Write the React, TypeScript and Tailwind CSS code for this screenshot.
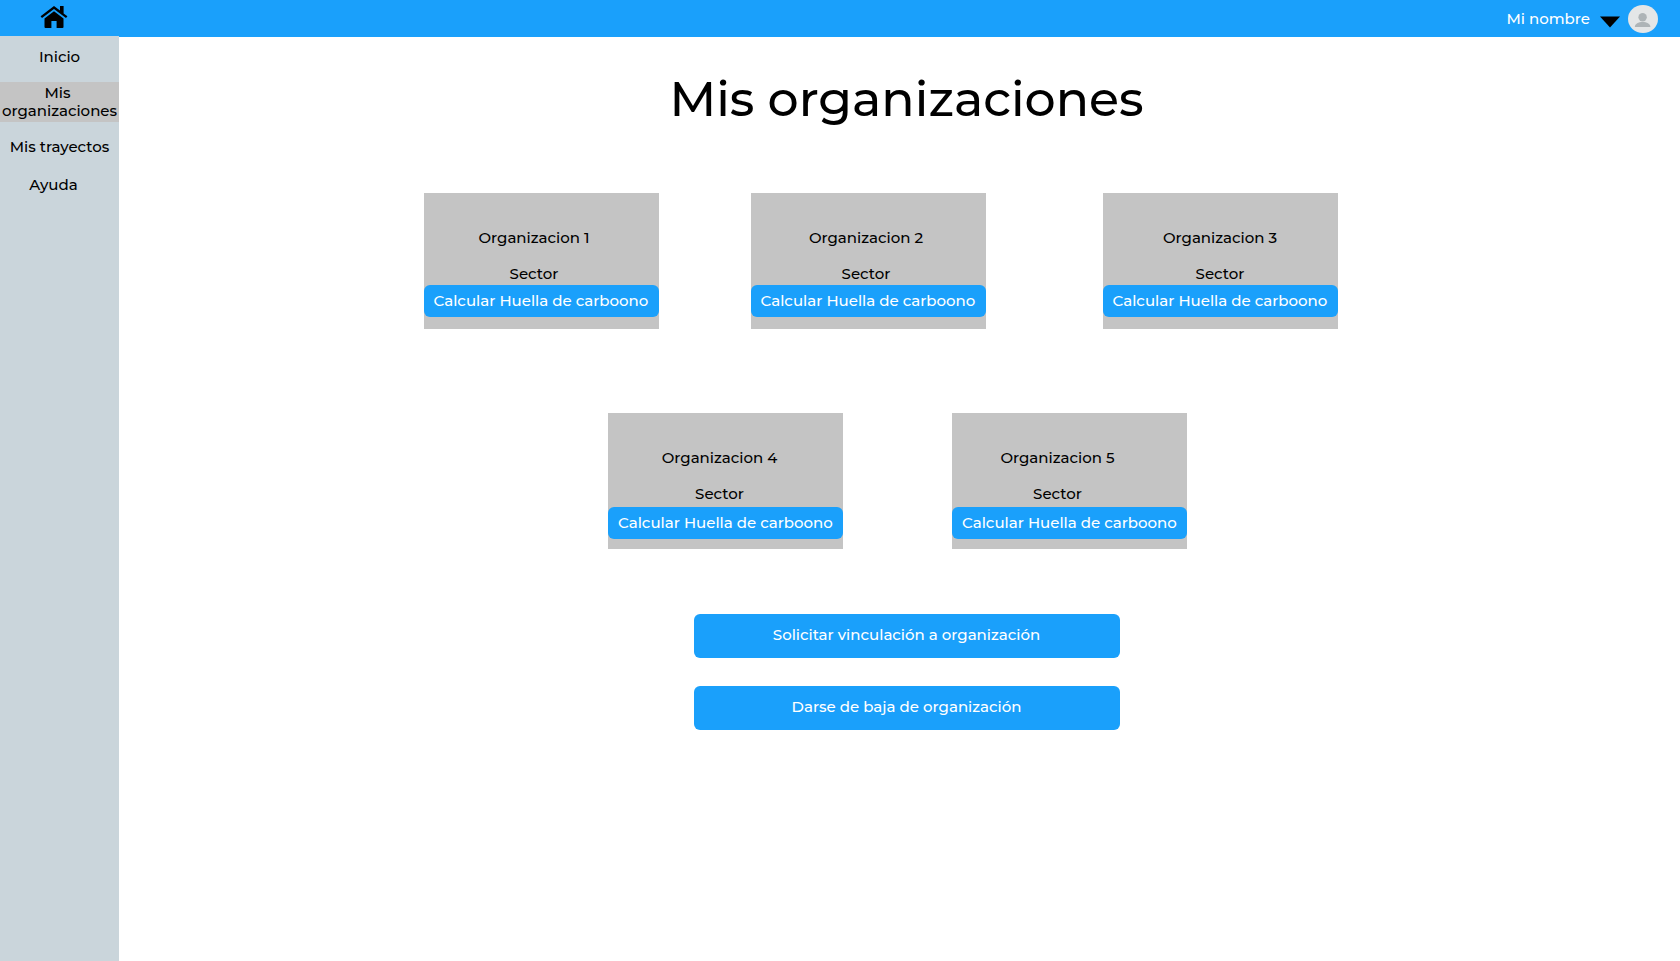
type Organization = { name: string; labelClass: string; className?: string };

const topRow: Organization[] = [
  { name: "Organizacion 1", labelClass: "pr-3.5" },
  { name: "Organizacion 2", labelClass: "pr-1" },
  { name: "Organizacion 3", labelClass: "", className: "ml-[25px]" },
];

const bottomRow: Organization[] = [
  { name: "Organizacion 4", labelClass: "pr-3" },
  { name: "Organizacion 5", labelClass: "pr-6" },
];

function HomeIcon() {
  return (
    <svg width="28" height="24" viewBox="0 0 28 24" aria-hidden="true">
      <path d="M14 1 L20 5.6 V1 H23.6 V8.4 L27.4 11.3 L26 13 L14 3.9 L2 13 L0.6 11.3 Z" />
      <path d="M14 6.2 L23.5 13.4 V22 Q23.5 23 22.5 23 H16.6 V16 H11.4 V23 H5.5 Q4.5 23 4.5 22 V13.4 Z" />
    </svg>
  );
}

function Avatar() {
  return (
    <svg width="30" height="28" viewBox="0 0 30 28" aria-hidden="true">
      <ellipse cx="15" cy="14" rx="15" ry="14" fill="#e4e6e7" />
      <circle cx="14.6" cy="12.2" r="4.2" fill="#aeb4b7" />
      <path d="M6.8 22 C7 18.6 10.4 17 14.6 17 C18.8 17 22.2 18.6 22.4 22 Z" fill="#aeb4b7" />
    </svg>
  );
}

function OrganizationCard({
  organization,
  buttonGap,
}: {
  organization: Organization;
  buttonGap: string;
}) {
  return (
    <article
      className={`flex h-[136px] w-[235px] flex-col bg-[#c4c4c4] pt-9 text-center ${organization.className ?? ""}`}
    >
      <div className={organization.labelClass}>
        <h2 className="leading-[18px]">{organization.name}</h2>
        <p className="mt-[18px] leading-[18px]">Sector</p>
      </div>
      <button
        type="button"
        className={`h-8 shrink-0 rounded-md bg-[#1aa0fb] whitespace-nowrap text-white ${buttonGap}`}
      >
        Calcular Huella de carboono
      </button>
    </article>
  );
}

export default function App() {
  return (
    <div className="flex min-h-screen flex-col bg-white font-['Montserrat','Inter',sans-serif] text-[15px] font-medium text-black">
      <header className="flex h-[37px] items-center justify-between bg-[#1aa0fb] pr-[22px] pl-10">
        <a href="#inicio" aria-label="Inicio" className="pb-1">
          <HomeIcon />
        </a>
        <div className="flex items-center">
          <span className="pt-0.5 text-white">Mi nombre</span>
          <button type="button" aria-label="Abrir menú" className="ml-2.5 pt-1.5">
            <svg width="20" height="12" viewBox="0 0 20 12" aria-hidden="true">
              <path d="M0 0.5 H20 L10 11.5 Z" />
            </svg>
          </button>
          <span className="ml-2">
            <Avatar />
          </span>
        </div>
      </header>

      <div className="flex flex-1">
        <nav className="-mt-px flex w-[119px] shrink-0 flex-col bg-[#cad5db] text-center leading-[18px]">
          <a href="#inicio" className="pt-3 pb-4">
            Inicio
          </a>
          <a href="#organizaciones" aria-current="page" className="bg-[#c4c4c4] py-0.5">
            <span className="block pr-1">Mis</span> organizaciones
          </a>
          <a href="#trayectos" className="pt-4 pb-2.5">
            Mis trayectos
          </a>
          <a href="#ayuda" className="py-2.5 pr-3">
            Ayuda
          </a>
        </nav>

        <main className="flex flex-1 flex-col items-center pl-3.5">
          <h1 className="mt-8 text-[49px] leading-[60px]">Mis organizaciones</h1>

          <section className="mt-16 flex gap-[92px] pr-[52px]">
            {topRow.map((organization) => (
              <OrganizationCard
                key={organization.name}
                organization={organization}
                buttonGap="mt-0.5"
              />
            ))}
          </section>

          <section className="mt-[84px] flex gap-[109px] pr-[18px]">
            {bottomRow.map((organization) => (
              <OrganizationCard
                key={organization.name}
                organization={organization}
                buttonGap="mt-1"
              />
            ))}
          </section>

          <div className="mt-[65px] flex w-[426px] flex-col gap-7">
            <button type="button" className="h-11 rounded-md bg-[#1aa0fb] pb-0.5 text-white">
              Solicitar vinculación a organización
            </button>
            <button type="button" className="h-11 rounded-md bg-[#1aa0fb] pb-0.5 text-white">
              Darse de baja de organización
            </button>
          </div>
        </main>
      </div>
    </div>
  );
}
